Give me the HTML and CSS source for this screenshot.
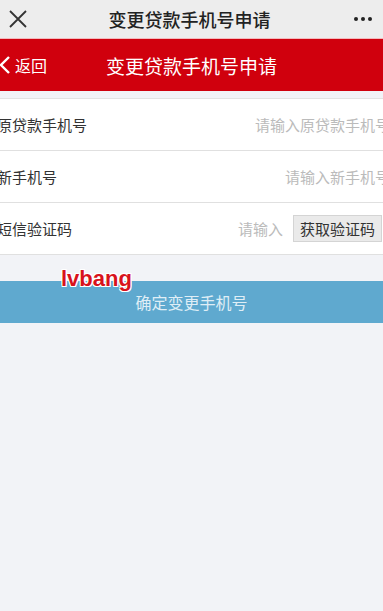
FILE: index.html
```html
<!DOCTYPE html>
<html lang="zh">
<head>
<meta charset="utf-8">
<link rel="stylesheet" href="styles.css">
</head>
<body>
<div class="wx-bar">
  <svg class="close" width="20" height="20" viewBox="0 0 20 20"><path d="M2 2 L18 18 M18 2 L2 18" stroke="#333" stroke-width="1.8" fill="none"/></svg>
  <div class="wx-title">变更贷款手机号申请</div>
  <div class="dots"><span></span><span></span><span></span></div>
</div>
<div class="red-bar">
  <div class="back">
    <svg width="10" height="20" viewBox="0 0 10 20"><path d="M9 2 L1 10 L9 18" stroke="#fff" stroke-width="2.4" fill="none"/></svg>
    <span>返回</span>
  </div>
  <div class="red-title">变更贷款手机号申请</div>
</div>
<div class="form">
  <div class="row"><span class="label">原贷款手机号</span><span class="ph">请输入原贷款手机号</span></div>
  <div class="row"><span class="label">新手机号</span><span class="ph">请输入新手机号</span></div>
  <div class="row"><span class="label">短信验证码</span><span class="ph short">请输入</span><span class="code-btn">获取验证码</span></div>
</div>
<div class="submit-wrap">
  <div class="mark">lvbang</div>
  <div class="submit">确定变更手机号</div>
</div>
</body>
</html>
```
FILE: styles.css
```css
html, body { margin: 0; padding: 0; }
body {
  width: 383px; height: 611px; overflow: hidden;
  background: #f2f3f7;
  font-family: "Noto Sans CJK SC", "Noto Sans", sans-serif;
}
.wx-bar {
  height: 38px; background: #ededed;
  display: flex; align-items: center; justify-content: space-between;
  padding: 0 11px 0 8px;
  border-bottom: 1px solid #f3b9bd;
  position: relative;
}
.close { display: block; }
.wx-title {
  position: absolute; left: 0; right: 0; text-align: center;
  font-size: 18px; font-weight: 500; color: #222; padding-right: 4px;
}
.dots { display: flex; gap: 3px; }
.dots span { width: 4px; height: 4px; border-radius: 50%; background: #222; }
.red-bar {
  height: 52px; background: #d0000d;
  display: flex; align-items: center; position: relative;
}
.back { display: flex; align-items: center; gap: 5px; color: #fff; font-size: 16px; }
.back svg { display: block; }
.red-title {
  position: absolute; left: 0; right: 0; text-align: center;
  color: #fff; font-size: 19px; padding-left: 0;
}
.form { margin-top: 7px; background: #fff; border-top: 1px solid #e3e3e3; }
.row {
  height: 52px; display: flex; align-items: center;
  border-bottom: 1px solid #e0e0e0;
  font-size: 15px; padding-bottom: 1px; box-sizing: border-box;
}
.label { color: #333; margin-left: -3px; flex: 1; }
.ph { color: #bbb; font-size: 15px; margin-right: -7px; }
.ph.short { margin-right: 10px; }
.code-btn {
  background: #eaeaea; border: 1px solid #d4d4d4; color: #333;
  font-size: 15px; padding: 2px 6px; margin-right: 1px;
}
.submit-wrap { position: relative; margin-top: 26px; }
.submit {
  height: 42px; background: #5fa9cf; color: #dfeef6;
  display: flex; align-items: center; justify-content: center;
  font-size: 16px;
}
.mark {
  position: absolute; left: 61px; top: -15px; z-index: 1;
  font-family: "Liberation Sans", Arial, sans-serif; font-weight: bold;
  font-size: 22px; color: #d8121c;
  text-shadow: 1px 1px 0 #fff, -1px -1px 0 #fff, 1px -1px 0 #fff, -1px 1px 0 #fff;
}
```
